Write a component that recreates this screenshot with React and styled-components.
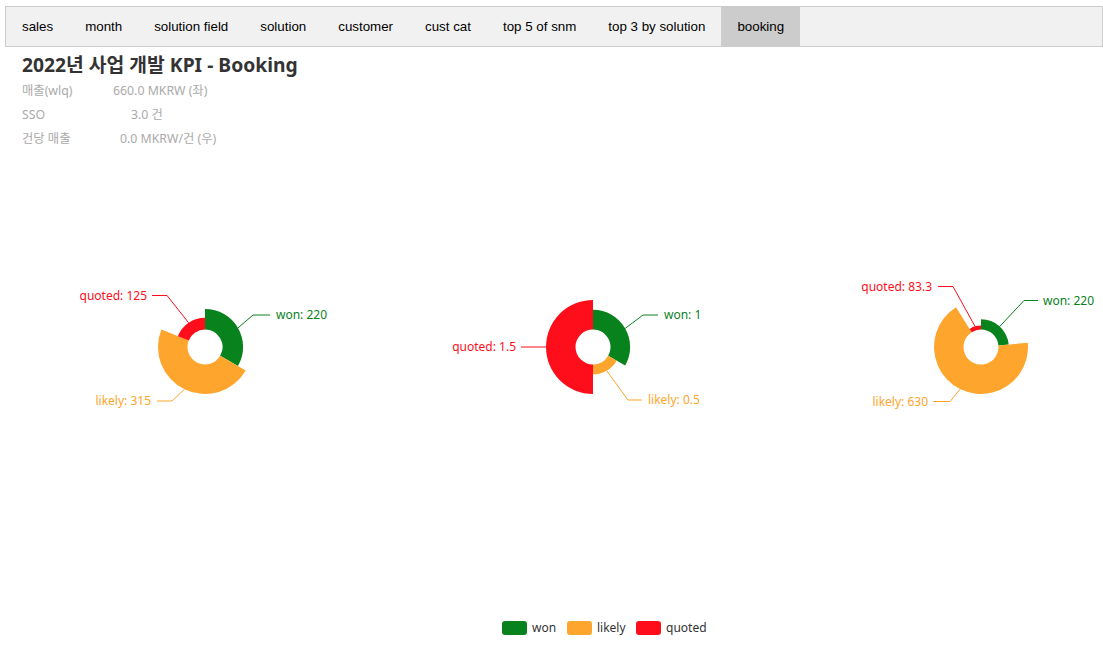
import React from "react";
import styled, { createGlobalStyle } from "styled-components";

const Global = createGlobalStyle`
  html, body { margin: 0; padding: 0; background: #fff; overflow: hidden; }
  body { font-family: "Liberation Sans", Arial, sans-serif; }
`;

const Page = styled.div`
  width: 1103px;
  height: 659px;
  display: flex;
  flex-direction: column;
`;

const TabBar = styled.div`
  margin: 6px 0 0 5px;
  display: flex;
  border: 1px solid #ccc;
  background: #f1f1f1;
  height: 39px;
`;

const Tab = styled.button`
  border: none;
  outline: none;
  margin: 0;
  padding: 0 16px;
  height: 39px;
  font-family: "Liberation Sans", Arial, sans-serif;
  font-size: 13.333px;
  color: #000;
  cursor: pointer;
  background: ${(p) => (p.$active ? "#ccc" : "transparent")};
`;

const Header = styled.div`
  padding: 5px 0 0 22px;
  font-family: "Noto Sans", "Noto Sans CJK KR", sans-serif;
`;

const Title = styled.h2`
  margin: 0 0 1px;
  height: 26px;
  line-height: 26px;
  font-size: 19.3px;
  font-weight: 700;
  color: #333;
`;

const InfoRow = styled.div`
  display: flex;
  height: 24px;
  line-height: 24px;
  font-size: 12.3px;
  color: #aaa;
`;

const InfoLabel = styled.span`
  width: ${(p) => p.$w}px;
  flex: none;
`;

const ChartSvg = styled.svg`
  display: block;
  width: 1103px;
  height: 508px;
  font-family: "Noto Sans", "Open Sans", sans-serif;
  font-size: 12px;
`;

const COLORS = { won: "#08821d", likely: "#fda52c", quoted: "#fe0e1b" };

const R0 = 17.5;
const R1 = 47;

const pt = (cx, cy, r, a) => {
  const rad = (a * Math.PI) / 180;
  return [cx + r * Math.sin(rad), cy - r * Math.cos(rad)];
};

const sector = (cx, cy, r0, r1, a0, a1) => {
  const large = a1 - a0 > 180 ? 1 : 0;
  const [x0, y0] = pt(cx, cy, r1, a0);
  const [x1, y1] = pt(cx, cy, r1, a1);
  const [x2, y2] = pt(cx, cy, r0, a1);
  const [x3, y3] = pt(cx, cy, r0, a0);
  return `M${x0} ${y0} A${r1} ${r1} 0 ${large} 1 ${x1} ${y1} L${x2} ${y2} A${r0} ${r0} 0 ${large} 0 ${x3} ${y3} Z`;
};

const pies = [
  {
    cx: 205,
    cy: 347,
    data: [
      { name: "won", value: 220, line: [[253, 315], [270, 315]], tx: 276, ty: 314.5, anchor: "start" },
      { name: "likely", value: 315, line: [[172, 401], [157, 401]], tx: 151, ty: 400.5, anchor: "end" },
      { name: "quoted", value: 125, line: [[167, 295.5], [152, 295.5]], tx: 147, ty: 295, anchor: "end" },
    ],
  },
  {
    cx: 593,
    cy: 347,
    data: [
      { name: "won", value: 1, line: [[643, 315], [658, 315]], tx: 664, ty: 314.5, anchor: "start" },
      { name: "likely", value: 0.5, line: [[628, 400], [642, 400]], tx: 648, ty: 399.5, anchor: "start" },
      { name: "quoted", value: 1.5, line: [[531, 347], [521, 347]], tx: 516, ty: 346.5, anchor: "end" },
    ],
  },
  {
    cx: 981,
    cy: 347,
    data: [
      { name: "won", value: 220, line: [[1024, 300.5], [1038, 300.5]], tx: 1043, ty: 300, anchor: "start" },
      { name: "likely", value: 630, line: [[950, 401.5], [933, 401.5]], tx: 928, ty: 401, anchor: "end" },
      { name: "quoted", value: 83.3, line: [[953, 286.5], [938, 286.5]], tx: 932, ty: 286, anchor: "end" },
    ],
  },
];

function RosePie({ cx, cy, data }) {
  const total = data.reduce((s, d) => s + d.value, 0);
  const max = Math.max(...data.map((d) => d.value));
  let acc = 0;
  const items = data.map((d) => {
    const a0 = (acc / total) * 360;
    acc += d.value;
    const a1 = (acc / total) * 360;
    const r = R0 + ((R1 - R0) * d.value) / max;
    const mid = (a0 + a1) / 2;
    const start = pt(cx, cy, r, mid);
    return { ...d, a0, a1, r, start };
  });
  return (
    <g>
      {items.map((d) => (
        <path key={d.name} d={sector(cx, cy, R0, d.r, d.a0, d.a1)} fill={COLORS[d.name]} />
      ))}
      {items.map((d) => (
        <g key={d.name + "l"}>
          <polyline
            points={[d.start, ...d.line].map((p) => p.join(",")).join(" ")}
            fill="none"
            stroke={COLORS[d.name]}
            strokeWidth="1"
          />
          <text x={d.tx} y={d.ty} fill={COLORS[d.name]} textAnchor={d.anchor} dominantBaseline="central">
            {d.name}: {d.value}
          </text>
        </g>
      ))}
    </g>
  );
}

const legend = [
  { name: "won", x: 502 },
  { name: "likely", x: 567 },
  { name: "quoted", x: 636 },
];

const tabs = [
  "sales",
  "month",
  "solution field",
  "solution",
  "customer",
  "cust cat",
  "top 5 of snm",
  "top 3 by solution",
  "booking",
];

export default function App() {
  return (
    <Page>
      <Global />
      <TabBar>
        {tabs.map((t) => (
          <Tab key={t} $active={t === "booking"}>
            {t}
          </Tab>
        ))}
      </TabBar>
      <Header>
        <Title>2022년 사업 개발 KPI - Booking</Title>
        <InfoRow>
          <InfoLabel $w={91}>매출(wlq)</InfoLabel>
          <span>660.0 MKRW (좌)</span>
        </InfoRow>
        <InfoRow>
          <InfoLabel $w={109}>SSO</InfoLabel>
          <span>3.0 건</span>
        </InfoRow>
        <InfoRow>
          <InfoLabel $w={98}>건당 매출</InfoLabel>
          <span>0.0 MKRW/건 (우)</span>
        </InfoRow>
      </Header>
      <ChartSvg viewBox="0 151 1103 508">
        {pies.map((p, i) => (
          <RosePie key={i} {...p} />
        ))}
        {legend.map((l) => (
          <g key={l.name}>
            <rect x={l.x} y={621} width={25} height={14} rx={3} fill={COLORS[l.name]} />
            <text x={l.x + 30} y={627.5} fill="#333" dominantBaseline="central">
              {l.name}
            </text>
          </g>
        ))}
      </ChartSvg>
    </Page>
  );
}
